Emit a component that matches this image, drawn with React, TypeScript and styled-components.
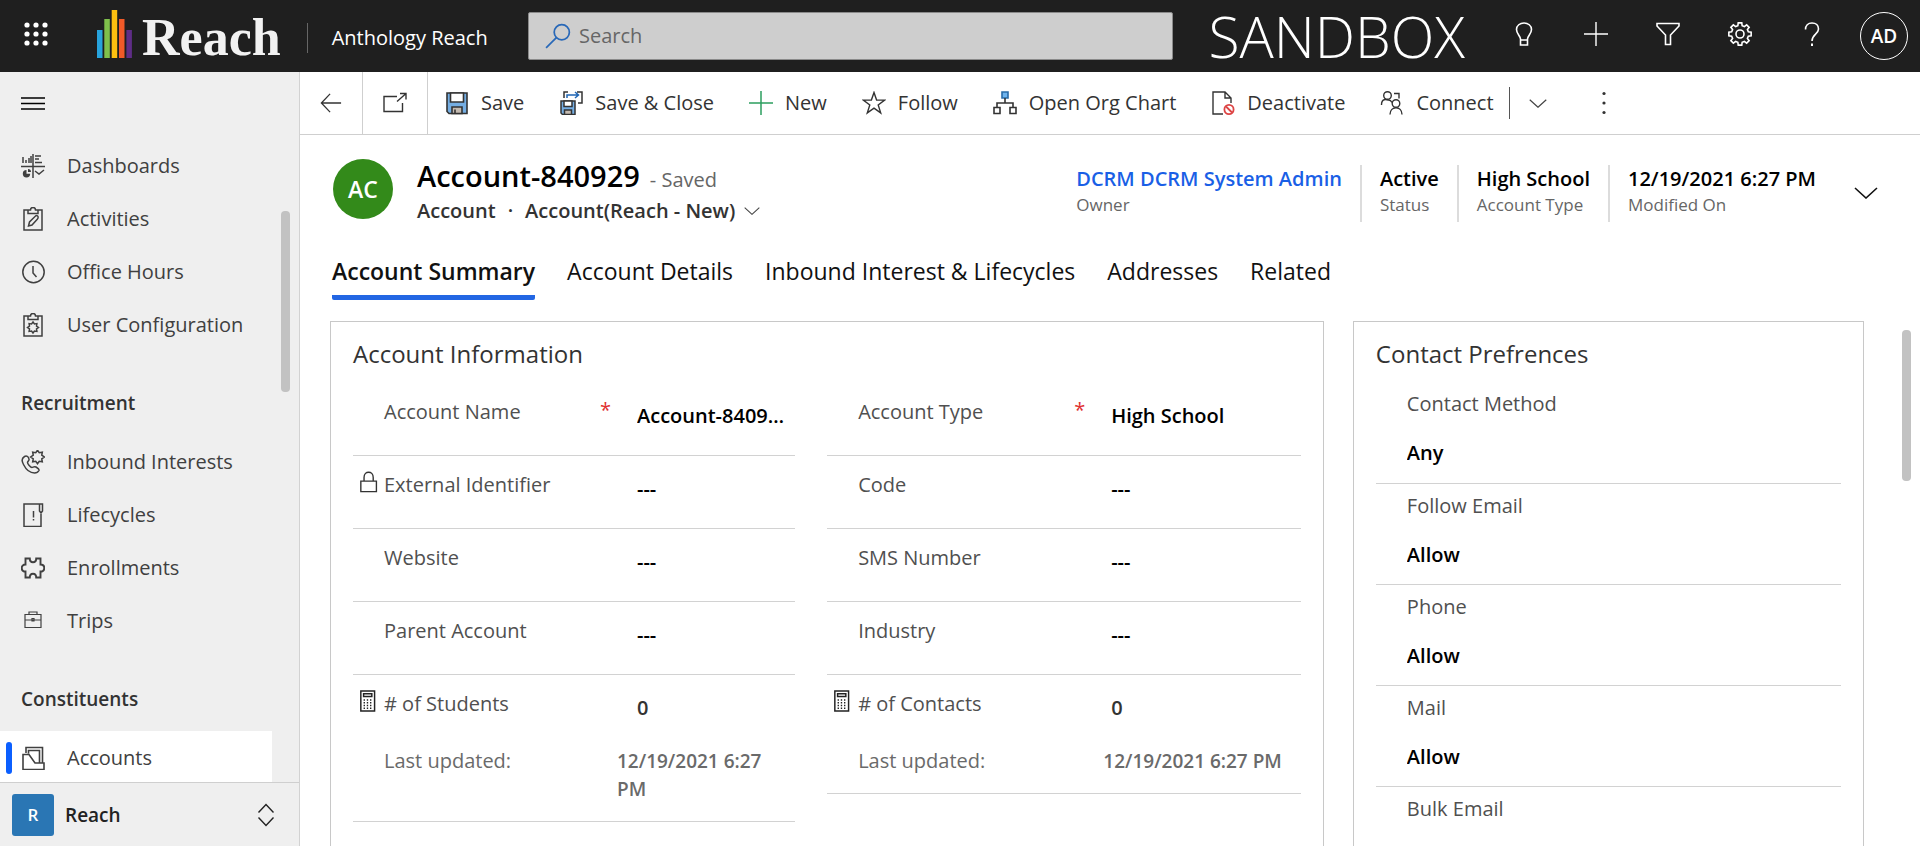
import React, { useId } from "react";
import styled, { createGlobalStyle, css } from "styled-components";

const GlobalStyle = createGlobalStyle`
  *, *::before, *::after { box-sizing: border-box; }
  body {
    margin: 0;
    background: #ffffff;
    color: #333333;
    font-family: "Open Sans", "Noto Sans", sans-serif;
    font-size: 20px;
    line-height: 28px;
  }
  button, input, select { font: inherit; color: inherit; }
  button { border: 0; padding: 0; background: none; cursor: pointer; }
  ul, dl, dd { margin: 0; padding: 0; list-style: none; }
  a { color: inherit; text-decoration: none; }
  svg { display: block; flex: none; }
`;

/* ---------- shell ---------- */

const Shell = styled.div`
  display: flex;
  flex-direction: column;
  height: 100vh;
  overflow: hidden;
`;

const Body = styled.div`
  display: flex;
  flex: 1;
  min-height: 0;
`;

/* ---------- top bar ---------- */

const TopBar = styled.header`
  display: flex;
  align-items: center;
  flex: none;
  height: 72px;
  background: #1f1f1f;
  color: #ffffff;
`;

const Brand = styled.div`
  display: flex;
  align-items: center;
  flex: 0 0 528px;
`;

const TopButton = styled.button`
  display: flex;
  align-items: center;
  justify-content: center;
  width: 72px;
  height: 72px;
  padding-bottom: 4px;
`;

const Logo = styled.a`
  display: flex;
  align-items: flex-end;
  gap: 10px;
  height: 48px;
  margin: 0 26px 4px 25px;
`;

const Wordmark = styled.span`
  font-family: "Liberation Serif", serif;
  font-size: 52px;
  font-weight: 700;
  line-height: 40px;
  color: #f2f2f2;
`;

const AppName = styled.span`
  margin-top: 3px;
  padding-left: 24px;
  border-left: 1px solid #666666;
  line-height: 30px;
  white-space: nowrap;
`;

const SearchBox = styled.label`
  display: flex;
  align-items: center;
  flex: 1;
  gap: 8px;
  height: 48px;
  padding: 0 16px;
  border: 1px solid #8a8a8a;
  border-radius: 2px;
  background: #cecece;
`;

const SearchInput = styled.input`
  flex: 1;
  min-width: 0;
  border: 0;
  outline: 0;
  padding: 0;
  background: transparent;
  color: #333333;
  &::placeholder { color: #666666; opacity: 1; }
`;

const Environment = styled.span`
  margin: 0 23px 0 35px;
  font-size: 57px;
  font-weight: 300;
  line-height: 72px;
`;

const UserBadge = styled.span`
  display: grid;
  place-items: center;
  width: 48px;
  height: 48px;
  margin-top: 4px;
  border: 1px solid #ffffff;
  border-radius: 50%;
  font-size: 19px;
  font-weight: 600;
`;

/* ---------- side navigation ---------- */

const SideNav = styled.nav`
  position: relative;
  display: flex;
  flex-direction: column;
  flex: 0 0 300px;
  border-right: 1px solid #d2d2d2;
  background: #efefef;
`;

const MenuToggle = styled.button`
  display: flex;
  align-items: center;
  flex: none;
  height: 62px;
  margin-bottom: 5px;
  padding-left: 21px;
`;

const NavScroll = styled.div`
  flex: 1;
  min-height: 0;
  overflow: hidden;
`;

const NavHeading = styled.h2`
  height: 84px;
  margin: 0;
  padding: 38px 0 0 21px;
  font-size: 19px;
  font-weight: 600;
  line-height: 28px;
`;

const NavItem = styled.a<{ $active?: boolean }>`
  display: flex;
  align-items: center;
  gap: 22px;
  width: 272px;
  height: 53px;
  padding-left: 6px;
  color: #404040;
  ${(p) => p.$active && css`background: #ffffff;`}
  &::before {
    content: "";
    width: 6px;
    height: 32px;
    margin-right: -13px;
    border-radius: 3px;
    background: ${(p) => (p.$active ? "#0b5fff" : "transparent")};
  }
`;

const ScrollThumb = styled.span<{ $top: number; $right: number; $length: number }>`
  position: absolute;
  top: ${(p) => p.$top}px;
  right: ${(p) => p.$right}px;
  width: 9px;
  height: ${(p) => p.$length}px;
  border-radius: 4px;
  background: #c2c2c2;
`;

const AreaSwitcher = styled.button`
  display: flex;
  align-items: center;
  flex: none;
  gap: 11px;
  height: 64px;
  padding: 0 21px 0 12px;
  border-top: 1px solid #cfcfcf;
  color: #222222;
  font-weight: 600;
  text-align: left;
`;

const AreaTile = styled.span`
  display: grid;
  place-items: center;
  width: 42px;
  height: 42px;
  border-radius: 3px;
  background: #2a76b4;
  color: #ffffff;
  font-size: 17px;
`;

const AreaName = styled.span`
  flex: 1;
  font-size: 19px;
`;

/* ---------- command bar ---------- */

const Main = styled.main`
  position: relative;
  display: flex;
  flex-direction: column;
  flex: 1;
  min-width: 0;
`;

const CommandBar = styled.div`
  display: flex;
  align-items: center;
  flex: none;
  height: 63px;
  border-bottom: 1px solid #cfcfcf;
  white-space: nowrap;
`;

const BarButton = styled.button<{ $width: number }>`
  display: flex;
  align-items: center;
  justify-content: center;
  width: ${(p) => p.$width}px;
  height: 62px;
  border-right: 1px solid #cfcfcf;
`;

const Commands = styled.div`
  display: flex;
  align-items: center;
  gap: 35px;
  padding-left: 17px;
`;

const Command = styled.button`
  display: flex;
  align-items: center;
  gap: 12px;
`;

const SplitButton = styled.button`
  display: flex;
  align-items: center;
  height: 32px;
  margin-left: 15px;
  padding-left: 19px;
  border-left: 1px solid #555555;
`;

const MoreButton = styled.button`
  margin-left: 45px;
`;

/* ---------- record header ---------- */

const RecordHeader = styled.section`
  display: flex;
  flex: none;
  height: 105px;
  padding: 24px 42px 0 33px;
`;

const RecordAvatar = styled.span`
  display: grid;
  place-items: center;
  width: 60px;
  height: 60px;
  margin-right: 24px;
  border-radius: 50%;
  background: #338a1a;
  color: #ffffff;
  font-size: 23px;
  font-weight: 600;
`;

const TitleBlock = styled.div`
  flex: 1;
  white-space: nowrap;
`;

const TitleRow = styled.div`
  display: flex;
  align-items: baseline;
  gap: 10px;
  height: 38px;
  color: #666666;
`;

const Title = styled.h1`
  margin: 0;
  color: #000000;
  font-size: 29px;
  font-weight: 600;
  line-height: 34px;
`;

const FormRow = styled.div`
  display: flex;
  align-items: center;
  gap: 12px;
  font-weight: 600;
`;

const FormPicker = styled.button`
  display: flex;
  align-items: center;
  gap: 9px;
`;

const Facts = styled.dl`
  display: flex;
  align-items: flex-start;
  padding-top: 6px;
  white-space: nowrap;
`;

const Fact = styled.div`
  display: flex;
  flex-direction: column-reverse;
  justify-content: flex-end;
  height: 57px;
  padding: 0 18px;
  & + & { border-left: 2px solid #dcdcdc; }
`;

const FactLabel = styled.dt`
  color: #666666;
  font-size: 17px;
  line-height: 24px;
`;

const FactValue = styled.dd`
  color: #000000;
  font-weight: 600;
`;

const OwnerLink = styled.a`
  color: #1a5fe6;
`;

const ExpandButton = styled.button`
  align-self: flex-start;
  margin: 28px 0 0 20px;
`;

/* ---------- tabs ---------- */

const TabList = styled.div`
  display: flex;
  flex: none;
  gap: 32px;
  height: 81px;
  padding: 15px 0 0 32px;
`;

const Tab = styled.button<{ $active?: boolean }>`
  align-self: flex-start;
  height: 45px;
  padding-bottom: 8px;
  border-bottom: 5px solid ${(p) => (p.$active ? "#2266e3" : "transparent")};
  border-radius: 2px;
  color: #111111;
  font-size: 23px;
  font-weight: ${(p) => (p.$active ? 600 : 400)};
  white-space: nowrap;
`;

/* ---------- form panels ---------- */

const Panels = styled.div`
  display: grid;
  grid-template-columns: 35fr 18fr;
  gap: 29px;
  flex: 1;
  min-height: 0;
  padding: 0 56px 0 30px;
  overflow: hidden;
`;

const Panel = styled.section`
  height: 900px;
  padding: 0 22px;
  border: 1px solid #c8c8c8;
`;

const PanelTitle = styled.h2`
  margin: 0;
  padding-top: 16px;
  font-size: 24px;
  font-weight: 400;
  line-height: 32px;
`;

const FieldColumns = styled.div`
  display: grid;
  grid-template-columns: 14fr 15fr;
  align-items: start;
  gap: 32px;
  padding-top: 13px;
`;

const FieldBlock = styled.div`
  border-bottom: 1px solid #d2d2d2;
`;

const FieldRow = styled.div`
  display: grid;
  grid-template-columns: 31px 216px 37px 1fr;
  height: 72px;
  padding: 15px 8px 0 0;
`;

const FieldIcon = styled.span`
  padding-left: 6px;
`;

const FieldLabel = styled.label`
  color: #505050;
`;

const Required = styled.span`
  color: #e03030;
  line-height: 24px;
`;

const valueStyle = css`
  width: 100%;
  min-width: 0;
  height: 28px;
  margin: 4px 0 0;
  padding: 0;
  border: 0;
  outline: 0;
  appearance: none;
  background: transparent;
  color: #000000;
  font-weight: 600;
  text-overflow: ellipsis;
`;

const ValueInput = styled.input`${valueStyle}`;
const ValueSelect = styled.select`${valueStyle}`;
const ValueOutput = styled.output`
  ${valueStyle}
  color: #333333;
`;

const NoteRow = styled.div`
  display: flex;
  padding: 0 19px 18px 31px;
  color: #6a6a6a;
`;

const NoteLabel = styled.span`
  flex: 1 0 233px;
`;

const NoteValue = styled.span`
  flex: 0 1 auto;
  font-size: 19px;
  font-weight: 600;
`;

const StackedFields = styled.div`
  margin-top: 12px;
`;

const StackedField = styled.div`
  display: flex;
  flex-direction: column;
  gap: 17px;
  height: 101px;
  padding: 8px 0 0 31px;
  & + & { border-top: 1px solid #d2d2d2; }
`;

/* ---------- icons ---------- */

type IconProps = { children: React.ReactNode; size?: number; stroke?: number; color?: string };

function Icon({ children, size = 24, stroke = 1.4, color = "currentColor" }: IconProps) {
  return (
    <svg width={size} height={size} viewBox="0 0 24 24" fill="none" stroke={color} strokeWidth={stroke} aria-hidden="true">
      {children}
    </svg>
  );
}

const waffle = (
  <Icon>
    {[3, 12, 21].flatMap((x) => [3, 12, 21].map((y) => <circle key={`${x}-${y}`} cx={x} cy={y} r="2.6" fill="#fff" stroke="none" />))}
  </Icon>
);

const logoBars = (
  <svg width="35" height="48" viewBox="0 0 35 48" aria-hidden="true">
    <rect x="0" y="20" width="5.5" height="28" fill="#27a3dc" />
    <rect x="7.3" y="9" width="5.5" height="39" fill="#7fc04b" />
    <rect x="14.7" y="0" width="5.5" height="48" fill="#fdc010" />
    <rect x="22" y="9" width="5.5" height="39" fill="#f05a28" />
    <rect x="29.4" y="20" width="5.5" height="28" fill="#5f2d87" />
  </svg>
);

const searchIcon = <Icon size={26} stroke={1.6} color="#2868b8"><circle cx="15.5" cy="8.5" r="7" /><path d="M10.5 13.5 1 23" /></Icon>;
const bulb = <Icon stroke={1.6}><path d="M8.500 17c0-3-4-5-4-9.500C4.500 3.500 8 1 12 1s7.500 2.500 7.500 6.500c0 4.500-4 6.500-4 9.500v6h-7z M8.500 18h7" /></Icon>;
const plusWhite = <Icon><path d="M12 0v24M0 12h24" /></Icon>;
const funnel = <Icon stroke={1.6}><path d="M1 1.500h22v2.500l-8.500 9v9.500h-5V13L1 4z" /></Icon>;

function cog(cx: number, cy: number, outer: number, inner: number, teeth: number) {
  const pts: string[] = [];
  const step = (Math.PI * 2) / teeth;
  for (let i = 0; i < teeth; i++) {
    [[-0.32, inner], [-0.2, outer], [0.2, outer], [0.32, inner]].forEach(([o, r]) => {
      const a = i * step + o * step;
      pts.push(`${(cx + r * Math.sin(a)).toFixed(2)} ${(cy - r * Math.cos(a)).toFixed(2)}`);
    });
  }
  return `M${pts.join("L")}z`;
}

function star8(cx: number, cy: number, outer: number, inner: number) {
  const pts = Array.from({ length: 16 }, (_, i) => {
    const r = i % 2 ? inner : outer;
    const a = (i * Math.PI) / 8;
    return `${(cx + r * Math.sin(a)).toFixed(2)} ${(cy - r * Math.cos(a)).toFixed(2)}`;
  });
  return `M${pts.join("L")}z`;
}

const gear = <Icon stroke={1.6}><path d={cog(12, 12, 11.3, 8.6, 8)} /><circle cx="12" cy="12" r="4" /></Icon>;
const help = <Icon stroke={1.6}><path d="M5.500 7.500C5.500 3.500 8 1 12 1s6.500 2.500 6.500 6c0 5-6.500 5.500-6.500 12" /><path d="M12 21.500V24" strokeWidth="2" /></Icon>;

const burger = <Icon stroke={1.4} color="#000"><path d="M0 7h24M0 12.500h24M0 18h24" /></Icon>;

const dashboards = (
  <Icon stroke={1.5}>
    <path d="M0 12.500h24M12 0v24M2 9V3M5 9V6M8 9V4M10 9V2M14 2h6M14 5h4M14 8.500h7M14 17l4 3 5-4" />
    <path d="M5.500 19.500V16a3.700 3.700 0 1 0 3.700 3.700H5.500zM7 15v3h3c0-2-1-3-3-3z" fill="currentColor" stroke="none" />
  </Icon>
);
const clipboardTop = <path d="M8 3H3v20h18V3h-5M7 6.500h10V3h-2.500a2.500 2.500 0 0 0-5 0H7z" />;
const activities = <Icon stroke={1.5}>{clipboardTop}<path d="m7.500 19 1-4 6-6q2-1 2.500.500t-.500 2.500l-5.500 6z" /></Icon>;
const clock = <Icon stroke={1.5}><circle cx="12.500" cy="12" r="10.700" /><path d="M12 6v7l3.500 4" /></Icon>;
const userConfig = <Icon stroke={1.5}>{clipboardTop}<path d={star8(12, 14.5, 5.5, 3.8)} /></Icon>;
const inbound = (
  <Icon stroke={1.5}>
    <path d="M3.500 6.500C1 8 .500 11 2.500 14.500c2.500 5 7 8.500 11 8.500 2 0 3.500-.700 4.500-2.500.500-1-.500-2-3-3.500-2-1-3 .500-4 .500-1.500 0-4.500-3.500-4.500-5s2-1.500 1.500-3.500C7.500 6.500 5.500 5.300 3.500 6.500z" />
    <path d={star8(16.5, 7, 6.8, 4.6)} />
  </Icon>
);
const lifecycles = <Icon stroke={1.5}><path d="M18.500 1H3v22.500h17V9.500M18.500 1h3v7l-1.500 2-1.500-2z" /><path d="M12.500 8v6.500M12.500 16v1.500" /></Icon>;
const puzzle = (
  <Icon stroke={1.9}>
    <path d="M4.500 2.500h4.300c0 5 6.400 5 6.400 0h4.300v6c5 0 5 7 0 7V21.500h-4.300c0-5-6.400-5-6.400 0H4.500v-6c-5 0-5-7 0-7z" />
  </Icon>
);
const briefcase = <Icon stroke={1.2}><path d="M4 5.500h16v13H4zM8 5.500V3h8v2.500M4 11h16M11 9.500h2V12h-2z" /></Icon>;
const accounts = <Icon stroke={1.6}><path d="M5 7V1.500h16.500V17M7.500 7.500V4.500h11V17M2 23.500V8.500h6l6 8.500h9v6.500z" /></Icon>;
const upDown = <Icon><path d="m4.500 9.500 7.500-8 7.500 8M4.500 14.500l7.500 8 7.500-8" /></Icon>;

const back = <Icon size={22} stroke={1.4}><path d="M23 12H2M11 2 1.500 12 11 22" /></Icon>;
const popOut = <Icon size={24} stroke={1.4}><path d="M14 5.500H1v15h18.500V12M14 10.500 22.500 3M17 2.500h6v6" /></Icon>;
const floppy = (
  <>
    <path d="M2 2h20v20.500H4L2 20.500z" fill="#75aee3" />
    <path d="M5.500 2h13v9h-13z" fill="#fff" />
    <path d="M7 22.500V16h10v6.500z" fill="#c4bab0" />
    <path d="M10 18.500v4" />
  </>
);
const save = <Icon stroke={1.6} size={24}>{floppy}</Icon>;
const saveClose = (
  <Icon stroke={1.5}>
    <path d="M2 10h14v13.500H3.500L2 22z" fill="#75aee3" />
    <path d="M5 10h8v5.500H5z" fill="#fff" />
    <path d="M5.500 23.500V19h7v4.500z" fill="#c4bab0" />
    <path d="M5 7V1h4M18 1h5v11h-4" />
    <path d="M8 7V4h11M16 1l3.500 3L16 7" stroke="#1f66b5" />
  </Icon>
);
const plusGreen = <Icon color="#2c9f5f" stroke={1.5}><path d="M12 0v24M0 12h24" /></Icon>;
const star = <Icon><path d="m12 1.500 2.600 7.600h8.100l-6.500 4.800 2.500 8-6.700-4.800-6.700 4.800 2.500-8-6.500-4.800h8.100z" /></Icon>;
const orgChart = (
  <Icon stroke={1.6}>
    <path d="M9 1h6v6H9z" fill="#6fb4ee" stroke="#2a6ca8" />
    <path d="M12 7v5M4 16.500V12h16v4.500M1 16.500h6v6H1zM17 16.500h6v6h-6z" />
  </Icon>
);
const deactivate = (
  <Icon>
    <path d="M12 23H2V1h12l6 6v5M14 1v6h6" />
    <g stroke="#dd4444" strokeWidth="1.8"><circle cx="18" cy="18.500" r="4.600" /><path d="m15 15.500 6 6" /></g>
  </Icon>
);
const connect = (
  <Icon>
    <circle cx="7.500" cy="4.500" r="3.800" /><path d="M1.500 14c0-7 5-5.500 7-5 1.500 0 3 1.500 3.500 2.500M14 2.500h5v5" />
    <circle cx="16" cy="12.500" r="3.800" /><path d="M10 23.500c0-9 12-9 12 0" />
  </Icon>
);
const moreDots = <Icon>{[2.5, 12, 21.5].map((y) => <circle key={y} cx="12" cy={y} r="1.600" fill="currentColor" stroke="none" />)}</Icon>;
const lock = <Icon size={22} stroke={1.5}><path d="M2 11h17v11.500H2zM5.500 11V7c0-7.500 10-7.500 10 0v4" /></Icon>;
const calculator = (
  <Icon size={22} stroke={1.6} color="#222">
    <path d="M2 1h15v22H2zM5 4h9v3H5z" />
    <path d="M5 11h10M5 14h10M5 17h10M5 20h10" strokeDasharray="1.500 2" />
  </Icon>
);

function Chevron({ width = 18, color = "#444" }: { width?: number; color?: string }) {
  return (
    <svg width={width} height={width / 2} viewBox="0 0 24 12" fill="none" stroke={color} strokeWidth="1.600" aria-hidden="true">
      <path d="m1 1 11 10L23 1" />
    </svg>
  );
}

/* ---------- data ---------- */

const generalLinks = [
  { label: "Dashboards", icon: dashboards },
  { label: "Activities", icon: activities },
  { label: "Office Hours", icon: clock },
  { label: "User Configuration", icon: userConfig },
];

const recruitmentLinks = [
  { label: "Inbound Interests", icon: inbound },
  { label: "Lifecycles", icon: lifecycles },
  { label: "Enrollments", icon: puzzle },
  { label: "Trips", icon: briefcase },
];

const commands = [
  { label: "Save", icon: save },
  { label: "Save & Close", icon: saveClose },
  { label: "New", icon: plusGreen },
  { label: "Follow", icon: star },
  { label: "Open Org Chart", icon: orgChart },
  { label: "Deactivate", icon: deactivate },
  { label: "Connect", icon: connect },
];

const tabs = ["Account Summary", "Account Details", "Inbound Interest & Lifecycles", "Addresses", "Related"];

const preferences = [
  { label: "Contact Method", value: "Any" },
  { label: "Follow Email", value: "Allow" },
  { label: "Phone", value: "Allow" },
  { label: "Mail", value: "Allow" },
  { label: "Bulk Email", value: "Allow" },
];

/* ---------- composed parts ---------- */

type FieldProps = {
  label: string;
  value: string;
  kind?: "text" | "select" | "rollup";
  locked?: boolean;
  required?: boolean;
  updated?: string;
};

function Field({ label, value, kind = "text", locked, required, updated }: FieldProps) {
  const id = useId();
  return (
    <FieldBlock>
      <FieldRow>
        <FieldIcon>{locked ? lock : kind === "rollup" ? calculator : null}</FieldIcon>
        <FieldLabel htmlFor={id}>{label}</FieldLabel>
        <Required>{required ? "*" : ""}</Required>
        {kind === "text" && <ValueInput id={id} defaultValue={value} readOnly={locked} />}
        {kind === "select" && (
          <ValueSelect id={id} defaultValue={value}>
            <option>{value}</option>
          </ValueSelect>
        )}
        {kind === "rollup" && <ValueOutput id={id}>{value}</ValueOutput>}
      </FieldRow>
      {updated && (
        <NoteRow>
          <NoteLabel>Last updated:</NoteLabel>
          <NoteValue>{updated}</NoteValue>
        </NoteRow>
      )}
    </FieldBlock>
  );
}

function Preference({ label, value }: { label: string; value: string }) {
  const id = useId();
  return (
    <StackedField>
      <FieldLabel htmlFor={id}>{label}</FieldLabel>
      <ValueSelect id={id} defaultValue={value}>
        <option>{value}</option>
      </ValueSelect>
    </StackedField>
  );
}

export default function App() {
  return (
    <Shell>
      <GlobalStyle />
      <TopBar>
        <Brand>
          <TopButton aria-label="App launcher">{waffle}</TopButton>
          <Logo href="#home">
            {logoBars}
            <Wordmark>Reach</Wordmark>
          </Logo>
          <AppName>Anthology Reach</AppName>
        </Brand>
        <SearchBox>
          {searchIcon}
          <SearchInput type="search" placeholder="Search" aria-label="Search" />
        </SearchBox>
        <Environment>SANDBOX</Environment>
        <TopButton aria-label="Tips">{bulb}</TopButton>
        <TopButton aria-label="Quick create">{plusWhite}</TopButton>
        <TopButton aria-label="Advanced find">{funnel}</TopButton>
        <TopButton aria-label="Settings">{gear}</TopButton>
        <TopButton aria-label="Help">{help}</TopButton>
        <TopButton aria-label="Account manager">
          <UserBadge>AD</UserBadge>
        </TopButton>
      </TopBar>

      <Body>
        <SideNav>
          <MenuToggle aria-label="Toggle navigation">{burger}</MenuToggle>
          <NavScroll>
            {generalLinks.map((l) => (
              <NavItem key={l.label} href="#nav">{l.icon}{l.label}</NavItem>
            ))}
            <NavHeading>Recruitment</NavHeading>
            {recruitmentLinks.map((l) => (
              <NavItem key={l.label} href="#nav">{l.icon}{l.label}</NavItem>
            ))}
            <NavHeading>Constituents</NavHeading>
            <NavItem href="#nav" $active aria-current="page">{accounts}Accounts</NavItem>
          </NavScroll>
          <ScrollThumb $top={139} $right={9} $length={181} />
          <AreaSwitcher>
            <AreaTile>R</AreaTile>
            <AreaName>Reach</AreaName>
            {upDown}
          </AreaSwitcher>
        </SideNav>

        <Main>
          <CommandBar>
            <BarButton $width={63} aria-label="Back">{back}</BarButton>
            <BarButton $width={65} aria-label="Open in new window">{popOut}</BarButton>
            <Commands>
              {commands.map((c) => (
                <Command key={c.label}>{c.icon}{c.label}</Command>
              ))}
            </Commands>
            <SplitButton aria-label="More connect options"><Chevron /></SplitButton>
            <MoreButton aria-label="More commands">{moreDots}</MoreButton>
          </CommandBar>

          <RecordHeader>
            <RecordAvatar>AC</RecordAvatar>
            <TitleBlock>
              <TitleRow>
                <Title>Account-840929</Title>
                <span>- Saved</span>
              </TitleRow>
              <FormRow>
                <span>Account</span>
                <span>·</span>
                <FormPicker>Account(Reach - New)<Chevron width={16} /></FormPicker>
              </FormRow>
            </TitleBlock>
            <Facts>
              <Fact>
                <FactLabel>Owner</FactLabel>
                <FactValue><OwnerLink href="#owner">DCRM DCRM System Admin</OwnerLink></FactValue>
              </Fact>
              <Fact>
                <FactLabel>Status</FactLabel>
                <FactValue>Active</FactValue>
              </Fact>
              <Fact>
                <FactLabel>Account Type</FactLabel>
                <FactValue>High School</FactValue>
              </Fact>
              <Fact>
                <FactLabel>Modified On</FactLabel>
                <FactValue>12/19/2021 6:27 PM</FactValue>
              </Fact>
            </Facts>
            <ExpandButton aria-label="Expand header"><Chevron width={24} color="#111" /></ExpandButton>
          </RecordHeader>

          <TabList role="tablist">
            {tabs.map((t, i) => (
              <Tab key={t} role="tab" aria-selected={i === 0} $active={i === 0}>{t}</Tab>
            ))}
          </TabList>

          <Panels>
            <Panel>
              <PanelTitle>Account Information</PanelTitle>
              <FieldColumns>
                <div>
                  <Field label="Account Name" value="Account-840929" required />
                  <Field label="External Identifier" value="---" locked />
                  <Field label="Website" value="---" />
                  <Field label="Parent Account" value="---" />
                  <Field label="# of Students" value="0" kind="rollup" updated="12/19/2021 6:27 PM" />
                </div>
                <div>
                  <Field label="Account Type" value="High School" kind="select" required />
                  <Field label="Code" value="---" />
                  <Field label="SMS Number" value="---" />
                  <Field label="Industry" value="---" kind="select" />
                  <Field label="# of Contacts" value="0" kind="rollup" updated="12/19/2021 6:27 PM" />
                </div>
              </FieldColumns>
            </Panel>
            <Panel>
              <PanelTitle>Contact Prefrences</PanelTitle>
              <StackedFields>
                {preferences.map((p) => <Preference key={p.label} {...p} />)}
              </StackedFields>
            </Panel>
          </Panels>
          <ScrollThumb $top={258} $right={9} $length={151} />
        </Main>
      </Body>
    </Shell>
  );
}
